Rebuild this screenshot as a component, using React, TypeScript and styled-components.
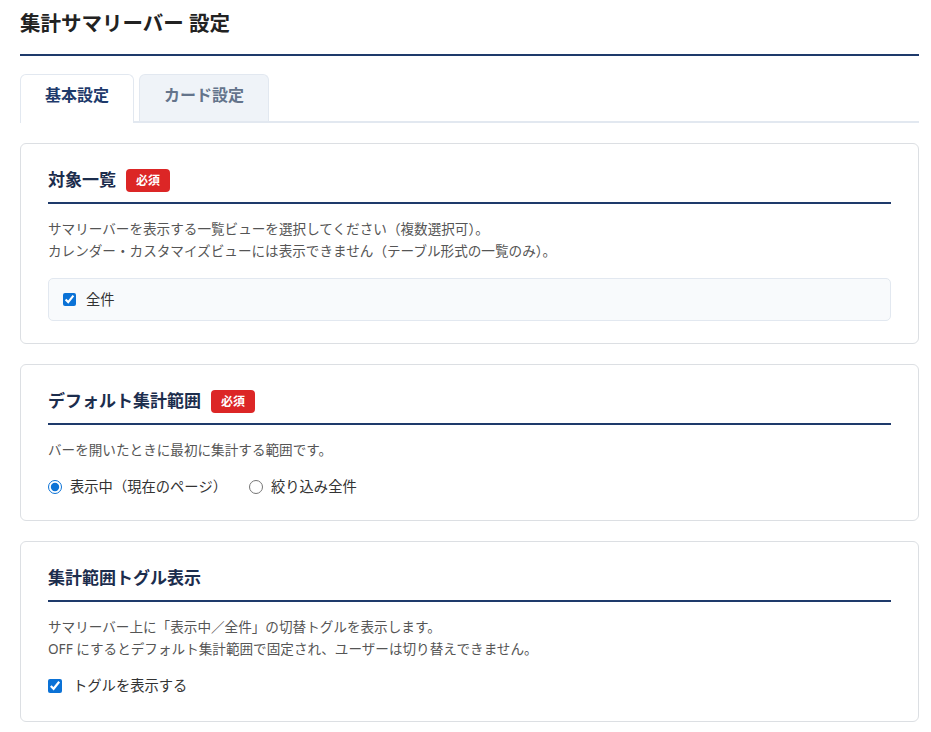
import React from "react";
import styled, { createGlobalStyle } from "styled-components";

const GlobalStyle = createGlobalStyle`
  html, body { margin: 0; padding: 0; background: #ffffff; }
  body {
    font-family: "Noto Sans", "Noto Sans CJK JP", sans-serif;
    color: #333333;
  }
  * { box-sizing: border-box; }
`;

const Page = styled.div`
  width: 899px;
  margin-left: 20px;
  padding-top: 8px;
  padding-bottom: 10px;
`;

const Header = styled.h1`
  margin: 0;
  font-size: 20.5px;
  line-height: 30px;
  font-weight: 700;
  color: #222222;
  padding-bottom: 16px;
  border-bottom: 2px solid #1e3a6b;
`;

const TabList = styled.div`
  display: flex;
  align-items: flex-end;
  gap: 5px;
  margin-top: 18px;
  border-bottom: 2px solid #e2e8f0;
`;

const Tab = styled.div<{ $active?: boolean }>`
  font-size: 16px;
  line-height: 24px;
  font-weight: 700;
  padding: 8px 24px ${(p) => (p.$active ? "16px" : "14px")};
  margin-bottom: ${(p) => (p.$active ? "-2px" : "0")};
  border: 1px solid #e2e8f0;
  border-bottom: none;
  border-radius: 6px 6px 0 0;
  background: ${(p) => (p.$active ? "#ffffff" : "#eff3f8")};
  color: ${(p) => (p.$active ? "#1e3a6b" : "#64748b")};
`;

const Cards = styled.div`
  display: flex;
  flex-direction: column;
  gap: 20px;
  margin-top: 20px;
`;

const Card = styled.section<{ $pb?: number }>`
  background: #ffffff;
  border: 1px solid #dcdfe3;
  border-radius: 6px;
  padding: 24px 27px ${(p) => p.$pb ?? 22}px;
`;

const TitleRow = styled.div`
  display: flex;
  align-items: center;
  gap: 10px;
  height: 24px;
  box-sizing: content-box;
  padding-bottom: 10px;
  border-bottom: 2px solid #1e3a6b;
`;

const Title = styled.h2`
  margin: 0;
  font-size: 17px;
  line-height: 24px;
  font-weight: 700;
  color: #1c2d4d;
`;

const Badge = styled.span`
  display: inline-block;
  background: #dc2626;
  color: #ffffff;
  font-size: 12px;
  line-height: 17px;
  font-weight: 700;
  padding: 3px 10px;
  border-radius: 4px;
`;

const Desc = styled.p`
  margin: 14px 0 0;
  font-size: 13.6px;
  line-height: 22px;
  color: #555555;
`;

const OptionBox = styled.div`
  margin-top: 16px;
  background: #f8fafc;
  border: 1px solid #e2e8f0;
  border-radius: 5px;
  padding: 10px 14px 9px;
`;

const OptionRow = styled.div<{ $gap?: number }>`
  display: flex;
  align-items: center;
  gap: ${(p) => p.$gap ?? 24}px;
  margin-top: 16px;
`;

const Choice = styled.label<{ $gap?: number }>`
  display: inline-flex;
  align-items: center;
  gap: ${(p) => p.$gap ?? 8}px;
  font-size: 14.3px;
  line-height: 20px;
  color: #333333;
`;

const Check = styled.input<{ $size?: number }>`
  width: ${(p) => p.$size ?? 14}px;
  height: ${(p) => p.$size ?? 14}px;
  margin: 0;
  accent-color: #0b72d6;
`;

export default function App() {
  return (
    <>
      <GlobalStyle />
      <Page>
        <Header>集計サマリーバー 設定</Header>
        <TabList>
          <Tab $active>基本設定</Tab>
          <Tab>カード設定</Tab>
        </TabList>
        <Cards>
          <Card>
            <TitleRow>
              <Title>対象一覧</Title>
              <Badge>必須</Badge>
            </TitleRow>
            <Desc>
              サマリーバーを表示する一覧ビューを選択してください（複数選択可）。
              <br />
              カレンダー・カスタマイズビューには表示できません（テーブル形式の一覧のみ）。
            </Desc>
            <OptionBox>
              <Choice $gap={10}>
                <Check type="checkbox" $size={13} defaultChecked />
                全件
              </Choice>
            </OptionBox>
          </Card>

          <Card $pb={23}>
            <TitleRow>
              <Title>デフォルト集計範囲</Title>
              <Badge>必須</Badge>
            </TitleRow>
            <Desc>バーを開いたときに最初に集計する範囲です。</Desc>
            <OptionRow $gap={22}>
              <Choice>
                <Check type="radio" name="range" defaultChecked />
                表示中（現在のページ）
              </Choice>
              <Choice>
                <Check type="radio" name="range" />
                絞り込み全件
              </Choice>
            </OptionRow>
          </Card>

          <Card $pb={25}>
            <TitleRow>
              <Title>集計範囲トグル表示</Title>
            </TitleRow>
            <Desc>
              サマリーバー上に「表示中／全件」の切替トグルを表示します。
              <br />
              OFF にするとデフォルト集計範囲で固定され、ユーザーは切り替えできません。
            </Desc>
            <OptionRow>
              <Choice $gap={11}>
                <Check type="checkbox" defaultChecked />
                トグルを表示する
              </Choice>
            </OptionRow>
          </Card>
        </Cards>
      </Page>
    </>
  );
}
